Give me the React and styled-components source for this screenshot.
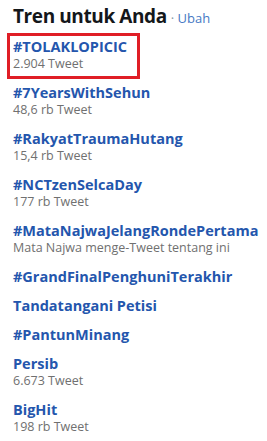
import React from 'react';
import styled, { createGlobalStyle } from 'styled-components';

const GlobalStyle = createGlobalStyle`
  body {
    margin: 0;
    background: #ffffff;
    font-family: "Open Sans", "Liberation Sans", sans-serif;
  }
`;

const Panel = styled.div`
  width: 267px;
  padding: 3px 0 0 13px;
  box-sizing: border-box;
`;

const Header = styled.div`
  display: flex;
  align-items: baseline;
  gap: 4px;
  margin-bottom: 2px;
  line-height: 26px;

  h3 {
    margin: 0;
    font-size: 19px;
    font-weight: 700;
    color: #14171a;
    letter-spacing: -0.4px;
  }

  span {
    font-size: 13px;
    color: #8899a6;

    a {
      color: #4679c4;
      text-decoration: none;
    }
  }
`;

const List = styled.ul`
  list-style: none;
  margin: 0;
  padding: 0;
`;

const Item = styled.li`
  padding: 4px 0 5px;

  ${(p) => p.$highlight && `
    margin: 0 127px 0 -6px;
    padding-left: 6px;
    box-shadow: inset 0 0 0 3px #e01e26;
  `}
`;

const Name = styled.div`
  font-size: 14.5px;
  line-height: 20px;
  font-weight: 700;
  color: #2456ad;
  white-space: nowrap;
`;

const Meta = styled.div`
  margin: -2px 0 2px;
  font-size: 12.5px;
  line-height: 17px;
  color: #707070;
  white-space: nowrap;
`;

const trends = [
  { name: '#TOLAKLOPICIC', meta: '2.904 Tweet', highlight: true },
  { name: '#7YearsWithSehun', meta: '48,6 rb Tweet' },
  { name: '#RakyatTraumaHutang', meta: '15,4 rb Tweet' },
  { name: '#NCTzenSelcaDay', meta: '177 rb Tweet' },
  { name: '#MataNajwaJelangRondePertama', meta: 'Mata Najwa menge-Tweet tentang ini' },
  { name: '#GrandFinalPenghuniTerakhir' },
  { name: 'Tandatangani Petisi' },
  { name: '#PantunMinang' },
  { name: 'Persib', meta: '6.673 Tweet' },
  { name: 'BigHit', meta: '198 rb Tweet' },
];

export default function App() {
  return (
    <>
      <GlobalStyle />
      <Panel>
        <Header>
          <h3>Tren untuk Anda</h3>
          <span>· <a href="#ubah">Ubah</a></span>
        </Header>
        <List>
          {trends.map((t) => (
            <Item key={t.name} $highlight={t.highlight}>
              <Name>{t.name}</Name>
              {t.meta && <Meta>{t.meta}</Meta>}
            </Item>
          ))}
        </List>
      </Panel>
    </>
  );
}
